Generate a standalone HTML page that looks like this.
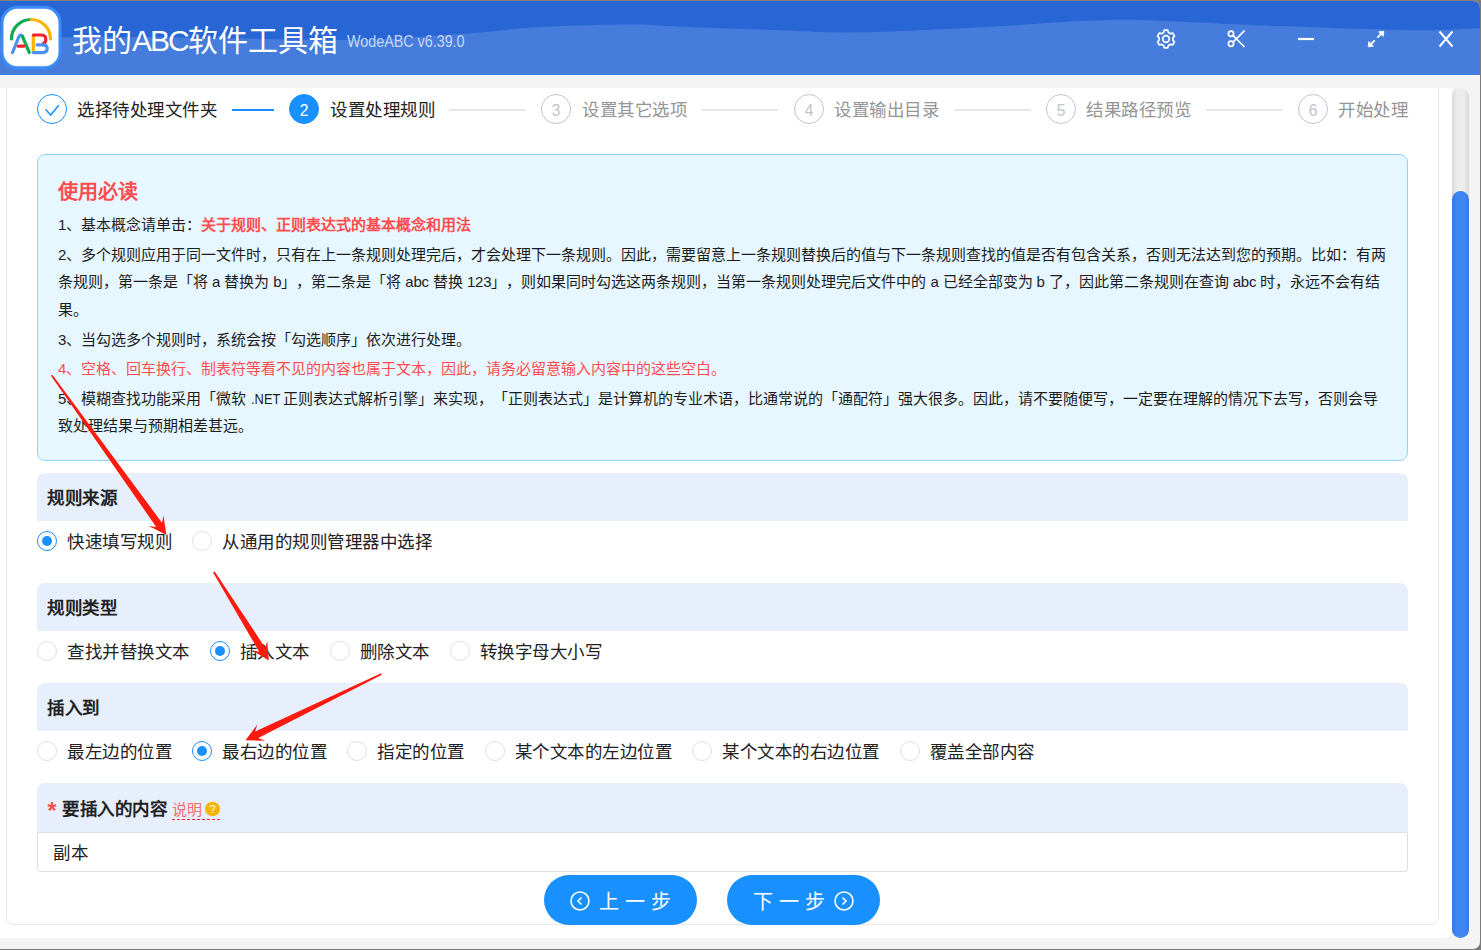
<!DOCTYPE html>
<html lang="zh-CN"><head><meta charset="utf-8">
<style>
*{box-sizing:border-box;margin:0;padding:0}
html,body{width:1481px;height:950px;overflow:hidden}
body{position:relative;text-spacing-trim:space-all;background:#7a7a7a;font-family:"Liberation Sans",sans-serif;color:#303133}
.abs{position:absolute}
#hdr{left:0;top:1px;width:1480px;height:74px;background:#2866d6;border-top-right-radius:7px;overflow:hidden}
#hdr svg.wave{position:absolute;left:0;top:-1px}
#title{left:72px;top:21px;font-size:30px;color:#fff;white-space:nowrap;line-height:40px}
#ver{left:347px;top:32px;font-size:16px;color:#c9d9f7;white-space:nowrap;line-height:20px;transform:scaleX(0.895);transform-origin:0 0}
#scroll{left:0;top:88px;width:1452px;height:850px;background:#fff;border-bottom-right-radius:8px;overflow:hidden}
#panel{left:6px;top:-20px;width:1433px;height:857px;border:1px solid #e6e6e6;border-radius:8px;background:#fff}
.step-c{position:absolute;top:94px;width:30px;height:30px;border-radius:50%;border:1px solid #c0c4cc;color:#c0c4cc;font-size:15.6px;text-align:center;line-height:31px}
.step-t{position:absolute;top:97px;font-size:17.5px;letter-spacing:0.5px;line-height:26px;color:#959595;white-space:nowrap}
.step-l{position:absolute;top:109px;height:2px;background:#e8e8e8}
#info{left:37px;top:154px;width:1371px;height:307px;background:#e6f7ff;border:1px solid #91d5ff;border-radius:8px}
#info .tt{position:absolute;left:20px;top:22px;font-size:20px;font-weight:bold;color:#ff4d4f;line-height:30px;white-space:nowrap}
#info .p{position:absolute;left:20px;font-size:15px;line-height:27.5px;color:#1c1c1c;white-space:nowrap}
.red,#info .p.red{color:#ff4d4f}
.sec{position:absolute;left:37px;width:1371px;height:48px;background:#e8effc;border-radius:8px 8px 0 0}
.sec .h{position:absolute;left:10px;top:11px;font-size:17.5px;letter-spacing:0.5px;font-weight:bold;line-height:28px;color:#222;white-space:nowrap}
.row{position:absolute;left:37px;height:20px;display:flex;align-items:center;white-space:nowrap}
.ri{display:flex;align-items:center;margin-right:20px;font-size:17.5px;letter-spacing:0.5px;color:#222}
.rt{position:relative;top:-1px}
.rd{width:20px;height:20px;border-radius:50%;border:1px solid #dcdfe6;background:#fff;margin-right:10px;position:relative;flex:none}
.rd.on{border-color:#1890ff}
.rd.on::after{content:"";position:absolute;left:4px;top:4px;width:10px;height:10px;border-radius:50%;background:#1890ff}
#input{left:37px;top:832px;width:1371px;height:40px;border:1px solid #dcdfe6;border-radius:0 0 3px 3px;background:#fff}
#input span{position:absolute;left:15px;top:7px;font-size:17.5px;letter-spacing:0.5px;line-height:26px;color:#222}
.btn{position:absolute;top:875px;width:153px;height:50px;border-radius:25px;background:#1890ff;color:#fff;font-size:17.5px;white-space:nowrap}
#sb{left:1452px;top:88px;width:17px;height:850px;border-radius:8.5px;background:linear-gradient(90deg,#d9d9d9,#ececec 30%,#ececec 70%,#d9d9d9)}
#thumb{left:1452px;top:191px;width:17px;height:747px;border-radius:8.5px;background:linear-gradient(90deg,#3778e4,#3f86f3 30%,#3f86f3 70%,#3778e4)}
</style></head><body>
<div class="abs" style="left:0;top:0;width:1481px;height:1px;background:#8a7f7a"></div>
<div class="abs" style="left:0;top:1px;width:1480px;height:948px;background:#f4f4f4;border-radius:0 7px 7px 0"></div>

<div id="hdr" class="abs">
<svg class="wave" width="1481" height="76" viewBox="0 0 1481 76"><path d="M0.0 37.5 C28.3 37.4 93.3 36.6 150.0 37.0 C206.7 37.4 298.3 39.8 340.0 40.0 C381.7 40.2 376.7 39.4 400.0 38.2 C423.3 37.0 456.7 34.5 480.0 32.6 C503.3 30.8 515.0 28.4 540.0 27.1 C565.0 25.8 606.5 24.7 630.0 24.6 C653.5 24.5 655.8 25.8 681.0 26.7 C706.2 27.6 751.2 29.3 781.0 30.2 C810.8 31.1 826.7 32.8 860.0 32.3 C893.3 31.8 944.2 29.1 981.0 27.2 C1017.8 25.3 1056.0 22.4 1081.0 21.1 C1106.0 19.9 1114.3 19.6 1131.0 19.7 C1147.7 19.8 1156.0 20.6 1181.0 21.7 C1206.0 22.8 1242.8 24.7 1281.0 26.1 C1319.2 27.5 1376.7 29.9 1410.0 30.2 C1443.3 30.5 1466.0 28.6 1481.0 28.2 L1481 76 L0 76 Z" fill="#467cdb"/></svg>
</div>

<!-- logo -->
<svg class="abs" style="left:0;top:5px" width="63" height="65" viewBox="0 0 63 65">
<rect x="2" y="2.3" width="58" height="60.5" rx="15.5" fill="#fff" stroke="#3a8cf6" stroke-width="3"/>
<path d="M11.5 34 A19.5 19.5 0 0 1 31 14.5" fill="none" stroke="#0eaa4e" stroke-width="3.2" stroke-linecap="round"/>
<path d="M31 14.5 A19.5 19.5 0 0 1 50.5 34" fill="none" stroke="#ffb300" stroke-width="3.2" stroke-linecap="round"/>
<path d="M12.5 47.5 L19 31.5 Q20.8 28.5 22.5 31.5" fill="none" stroke="#4a92f7" stroke-width="3.2" stroke-linecap="round"/>
<path d="M22.5 31.5 L29.3 47.5" fill="none" stroke="#0eaa4e" stroke-width="3.2" stroke-linecap="round"/>
<path d="M18.3 41.2 L23.6 41.2" fill="none" stroke="#f5222d" stroke-width="3.2" stroke-linecap="round"/>
<path d="M33.3 30 L33.3 47.5" fill="none" stroke="#ffb300" stroke-width="3.2"/>
<path d="M33.3 30 L41.5 30 Q46 30 45.8 35 Q45.6 37.5 43 39" fill="none" stroke="#f5222d" stroke-width="3.2" stroke-linecap="round"/>
<path d="M37 39.8 L42.5 39.8 Q47.2 39.8 47.2 43.6 Q47.2 47.6 42.5 47.6 L33.3 47.6" fill="none" stroke="#4a92f7" stroke-width="3.2" stroke-linecap="round"/>
</svg>

<div id="title" class="abs">我的<span style="letter-spacing:-2px">ABC</span>软件工具箱</div>
<div id="ver" class="abs">WodeABC v6.39.0</div>

<!-- header icons -->
<svg class="abs" style="left:1150px;top:24px" width="320" height="30" viewBox="0 0 320 30">
 <path d="M13.61 8.42 L14.28 6.17 L17.72 6.17 L18.39 8.42 L20.50 9.64 L22.79 9.10 L24.51 12.07 L22.89 13.78 L22.89 16.22 L24.51 17.93 L22.79 20.90 L20.50 20.36 L18.39 21.58 L17.72 23.83 L14.28 23.83 L13.61 21.58 L11.50 20.36 L9.21 20.90 L7.49 17.93 L9.11 16.22 L9.11 13.78 L7.49 12.07 L9.21 9.10 L11.50 9.64 Z" fill="none" stroke="#fff" stroke-width="1.7" stroke-linejoin="round"/>
 <circle cx="16" cy="15" r="3.3" fill="none" stroke="#fff" stroke-width="1.7"/>
 <g fill="none" stroke="#fff" stroke-width="1.7">
  <circle cx="81" cy="9.8" r="2.6"/>
  <circle cx="81" cy="19.8" r="2.6"/>
  <path d="M83.2 11.6 L94.5 23 M83.2 18 L94.5 6.6"/>
 </g>
 <path d="M148 15 H164" stroke="#fff" stroke-width="2.2"/>
 <g fill="#fff" stroke="#fff" stroke-width="0.8" stroke-linejoin="round">
  <path d="M233.8 7.2 L228.6 7.8 L233.2 12.4 Z"/>
  <path d="M218.2 22.8 L223.4 22.2 L218.8 17.6 Z"/>
 </g>
 <path d="M227.3 13.7 L231 10 M224.7 16.3 L221 20" stroke="#fff" stroke-width="1.8"/>
 <path d="M289.5 7.5 L302.5 22.5 M302.5 7.5 L289.5 22.5" stroke="#fff" stroke-width="2"/>
</svg>

<div id="scroll" class="abs">
 <div id="panel" class="abs"></div>
</div>

<!-- steps -->
<div class="step-c" style="left:37px;border-color:#1890ff"><svg width="28" height="28" viewBox="0 0 28 28" style="position:absolute;left:0;top:0"><path d="M7.5 14.3 L12.7 20 L20.8 10.3" fill="none" stroke="#1890ff" stroke-width="1.5"/></svg></div>
<div class="step-t" style="left:77px;color:#222">选择待处理文件夹</div>
<div class="step-l" style="left:232px;width:42px;background:#1890ff"></div>
<div class="step-c" style="left:289px;background:#1890ff;border-color:#1890ff;color:#fff">2</div>
<div class="step-t" style="left:330px;color:#222">设置处理规则</div>
<div class="step-l" style="left:449px;width:77px"></div>
<div class="step-c" style="left:541px">3</div>
<div class="step-t" style="left:582px">设置其它选项</div>
<div class="step-l" style="left:701px;width:77px"></div>
<div class="step-c" style="left:794px">4</div>
<div class="step-t" style="left:834px">设置输出目录</div>
<div class="step-l" style="left:954px;width:77px"></div>
<div class="step-c" style="left:1046px">5</div>
<div class="step-t" style="left:1086px">结果路径预览</div>
<div class="step-l" style="left:1206px;width:77px"></div>
<div class="step-c" style="left:1298px">6</div>
<div class="step-t" style="left:1338px">开始处理</div>

<!-- info -->
<div id="info" class="abs">
 <div class="tt">使用必读</div>
 <div class="p" style="top:55.5px">1、基本概念请单击：<b class="red">关于规则、正则表达式的基本概念和用法</b></div>
 <div class="p" style="top:85.5px">2、多个规则应用于同一文件时，只有在上一条规则处理完后，才会处理下一条规则。因此，需要留意上一条规则替换后的值与下一条规则查找的值是否有包含关系，否则无法达到您的预期。比如：有两</div>
 <div class="p" style="top:113px">条规则，第一条是「将<span style="letter-spacing:-0.18px"> a </span>替换为<span style="letter-spacing:-0.18px"> b</span>」，第二条是「将<span style="letter-spacing:-0.18px"> abc </span>替换<span style="letter-spacing:-0.18px"> 123</span>」，则如果同时勾选这两条规则，当第一条规则处理完后文件中的<span style="letter-spacing:-0.18px"> a </span>已经全部变为<span style="letter-spacing:-0.18px"> b </span>了，因此第二条规则在查询<span style="letter-spacing:-0.18px"> abc </span>时，永远不会有结</div>
 <div class="p" style="top:140.5px">果。</div>
 <div class="p" style="top:170.5px">3、当勾选多个规则时，系统会按「勾选顺序」依次进行处理。</div>
 <div class="p red" style="top:200px">4、空格、回车换行、制表符等看不见的内容也属于文本，因此，请务必留意输入内容中的这些空白。</div>
 <div class="p" style="top:229.5px">5、模糊查找功能采用「微软 <span style="display:inline-block;width:28.5px;transform:scaleX(0.86);transform-origin:0 0">.NET</span> 正则表达式解析引擎」来实现，「正则表达式」是计算机的专业术语，比通常说的「通配符」强大很多。因此，请不要随便写，一定要在理解的情况下去写，否则会导</div>
 <div class="p" style="top:257px">致处理结果与预期相差甚远。</div>
</div>

<div class="sec" style="top:473px"><div class="h">规则来源</div></div>
<div class="row" style="top:531px">
 <div class="ri"><span class="rd on"></span><span class="rt">快速填写规则</span></div>
 <div class="ri"><span class="rd"></span><span class="rt">从通用的规则管理器中选择</span></div>
</div>
<div class="sec" style="top:583px"><div class="h">规则类型</div></div>
<div class="row" style="top:641px">
 <div class="ri"><span class="rd"></span><span class="rt">查找并替换文本</span></div>
 <div class="ri"><span class="rd on"></span><span class="rt">插入文本</span></div>
 <div class="ri"><span class="rd"></span><span class="rt">删除文本</span></div>
 <div class="ri"><span class="rd"></span><span class="rt">转换字母大小写</span></div>
</div>
<div class="sec" style="top:683px"><div class="h">插入到</div></div>
<div class="row" style="top:741px">
 <div class="ri"><span class="rd"></span><span class="rt">最左边的位置</span></div>
 <div class="ri"><span class="rd on"></span><span class="rt">最右边的位置</span></div>
 <div class="ri"><span class="rd"></span><span class="rt">指定的位置</span></div>
 <div class="ri"><span class="rd"></span><span class="rt">某个文本的左边位置</span></div>
 <div class="ri"><span class="rd"></span><span class="rt">某个文本的右边位置</span></div>
 <div class="ri"><span class="rd"></span><span class="rt">覆盖全部内容</span></div>
</div>
<div class="sec" style="top:783px;height:49px">
 <div class="abs" style="left:10.5px;top:14px;font-size:23px;font-weight:bold;color:#f5504f;line-height:28px">*</div>
 <div class="h" style="left:25px;top:11.5px">要插入的内容</div>
 <div class="abs" style="left:135px;top:17px;font-size:15px;color:#f56c6c;line-height:20px;white-space:nowrap">说明</div>
 <div class="abs" style="left:135px;top:35.5px;width:48px;height:0;border-top:1px dashed #f5222d"></div>
 <div class="abs" style="left:168.3px;top:18.7px;width:14.6px;height:14.6px;border-radius:50%;background:#f5b400;color:#fff;font-size:11px;line-height:14.6px;text-align:center">?</div>
</div>
<div id="input" class="abs"><span>副本</span></div>

<div class="btn" style="left:544px">
 <svg class="abs" style="left:26px;top:16px" width="20" height="20" viewBox="0 0 20 20"><circle cx="10" cy="10" r="9" fill="none" stroke="#fff" stroke-width="1.6"/><path d="M11.5 6.5 L8 10 L11.5 13.5" fill="none" stroke="#fff" stroke-width="1.6"/></svg>
 <span class="abs" style="left:55px;top:12.5px;line-height:28px;font-size:20px;letter-spacing:6px">上一步</span>
</div>
<div class="btn" style="left:727px">
 <span class="abs" style="left:26px;top:12.5px;line-height:28px;font-size:20px;letter-spacing:6px">下一步</span>
 <svg class="abs" style="left:107px;top:16px" width="20" height="20" viewBox="0 0 20 20"><circle cx="10" cy="10" r="9" fill="none" stroke="#fff" stroke-width="1.6"/><path d="M8.5 6.5 L12 10 L8.5 13.5" fill="none" stroke="#fff" stroke-width="1.6"/></svg>
</div>

<div id="sb" class="abs"></div>
<div id="thumb" class="abs"></div>

<!-- arrows -->
<svg class="abs" style="left:0;top:0;pointer-events:none" width="1481" height="950" viewBox="0 0 1481 950">
 <g fill="#ff1a10">
  <path d="M51.0 375.7 L156.2 526.9 L148.9 526.0 L166.4 535.0 L163.5 515.5 L162.0 522.7 L52.4 374.7 Z"/>
  <path d="M213.1 572.5 L259.1 651.7 L251.9 650.3 L268.8 660.4 L267.2 640.8 L265.3 647.9 L214.7 571.5 Z"/>
  <path d="M381.1 673.2 L255.2 731.6 L257.3 724.5 L245.5 740.3 L265.2 740.7 L258.3 738.1 L381.9 674.8 Z"/>
 </g>
</svg>
</body></html>
